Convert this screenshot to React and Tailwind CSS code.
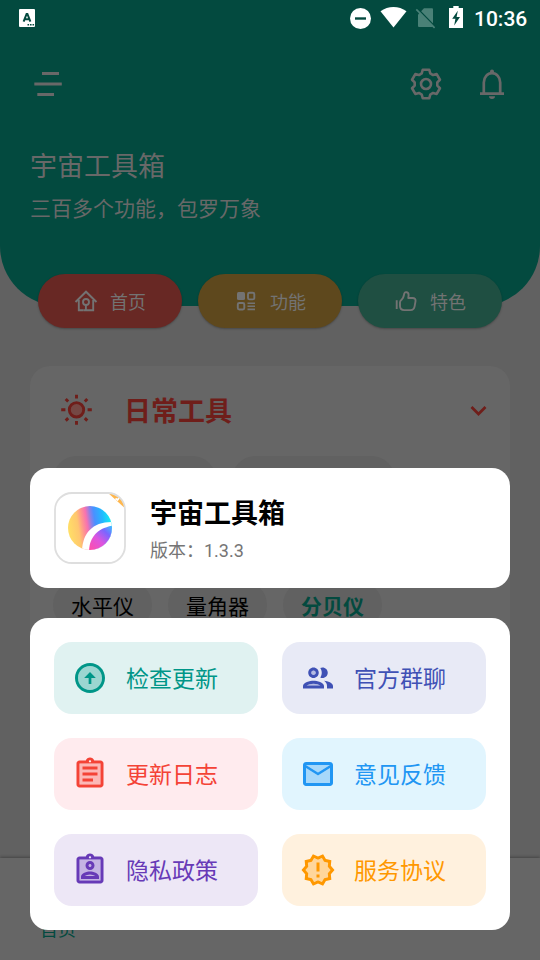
import React from 'react';

const FRAME =
  'M19 3h-4.18C14.4 1.84 13.3 1 12 1c-1.3 0-2.4.84-2.82 2H5c-1.1 0-2 .9-2 2v14c0 1.1.9 2 2 2h14c1.1 0 2-.9 2-2V5c0-1.1-.9-2-2-2zm-7-.25c.41 0 .75.34.75.75s-.34.75-.75.75-.75-.34-.75-.75.34-.75.75-.75zM19 19H5V5h14v14z';

const ACTIONS = [
  {
    label: '检查更新',
    tile: 'bg-[#e0f2f1] text-[#009688]',
    soft: 'M12 4a8 8 0 1 0 0 16 8 8 0 0 0 0-16z',
    line: 'M12 20c-4.41 0-8-3.59-8-8s3.59-8 8-8 8 3.59 8 8-3.59 8-8 8m0 2c5.52 0 10-4.48 10-10S17.52 2 12 2 2 6.48 2 12s4.48 10 10 10zM11.1 12v4h1.8v-4h3L12 8l-3.9 4h3z',
  },
  {
    label: '官方群聊',
    tile: 'bg-[#e8eaf6] text-[#3f51b5]',
    soft: 'M4.34 17h9.32c-.84-.58-2.87-1.25-4.66-1.25S5.18 16.42 4.34 17zM9 7a1.5 1.5 0 1 0 0 3 1.5 1.5 0 0 0 0-3z',
    line: 'M9 13.75c-2.34 0-7 1.17-7 3.5V19h14v-1.75c0-2.33-4.66-3.5-7-3.5zM4.34 17c.84-.58 2.87-1.25 4.66-1.25s3.82.67 4.66 1.25H4.34zM9 12c1.93 0 3.5-1.57 3.5-3.5S10.93 5 9 5 5.5 6.57 5.5 8.5 7.07 12 9 12zm0-5c.83 0 1.5.67 1.5 1.5S9.83 10 9 10s-1.5-.67-1.5-1.5S8.17 7 9 7zm7.04 6.81c1.16.84 1.96 1.96 1.96 3.44V19h4v-1.75c0-2.02-3.5-3.17-5.96-3.44zM15 12c1.93 0 3.5-1.57 3.5-3.5S16.93 5 15 5c-.54 0-1.04.13-1.5.35.63.89 1 1.98 1 3.15s-.37 2.26-1 3.15c.46.22.96.35 1.5.35z',
  },
  {
    label: '更新日志',
    tile: 'bg-[#ffebee] text-[#f44336]',
    soft: 'M5 5h14v14H5z',
    line: FRAME + 'M7 15h7v2H7zM7 11h10v2H7zM7 7h10v2H7z',
  },
  {
    label: '意见反馈',
    tile: 'bg-[#e1f5fe] text-[#2196f3]',
    soft: 'M20 8l-8 5-8-5v10h16zM20 6H4l8 4.99z',
    line: 'M22 6c0-1.1-.9-2-2-2H4c-1.1 0-2 .9-2 2v12c0 1.1.9 2 2 2h16c1.1 0 2-.9 2-2V6zm-2 0l-8 4.99L4 6h16zm0 12H4V8l8 5 8-5v10z',
  },
  {
    label: '隐私政策',
    tile: 'bg-[#ede7f6] text-[#673ab7]',
    soft: 'M5 5h14v14H5z',
    line:
      FRAME +
      'M12 12c1.65 0 3-1.35 3-3s-1.35-3-3-3-3 1.35-3 3 1.35 3 3 3zm0-4c.55 0 1 .45 1 1s-.45 1-1 1-1-.45-1-1 .45-1 1-1zm6 8.58c0-2.5-3.97-3.58-6-3.58s-6 1.08-6 3.58V18h12v-1.42zM8.48 16c.74-.51 2.23-1 3.52-1s2.78.49 3.52 1H8.48z',
  },
  {
    label: '服务协议',
    tile: 'bg-[#fff1de] text-[#ff9800]',
    soft: 'M18.49 9.89l.26-2.79-2.74-.62-1.43-2.41L12 5.18 9.42 4.07 7.99 6.49l-2.74.61.26 2.78L3.66 12l1.85 2.1-.26 2.8 2.74.62 1.43 2.41L12 18.82l2.58 1.11 1.43-2.41 2.74-.62-.26-2.79L20.34 12z',
    line: 'M23 12l-2.44-2.79.34-3.69-3.61-.82-1.89-3.2L12 2.96 8.6 1.5 6.71 4.69 3.1 5.5l.34 3.7L1 12l2.44 2.79-.34 3.7 3.61.82L8.6 22.5l3.4-1.47 3.4 1.46 1.89-3.19 3.61-.82-.34-3.69L23 12zm-4.51 2.11l.26 2.79-2.74.62-1.43 2.41L12 18.82l-2.58 1.11-1.43-2.41-2.74-.62.26-2.8L3.66 12l1.85-2.12-.26-2.78 2.74-.61 1.43-2.41L12 5.18l2.58-1.11 1.43 2.41 2.74.62-.26 2.79L20.34 12l-1.85 2.11zM11 15h2v2h-2zM11 7h2v6h-2z',
  },
];

// Six-toothed gear outline, centred on 0,0.
const GEAR = (() => {
  const pts = [];
  for (let k = 0; k < 6; k++) {
    for (const [r, a] of [[11.4, -22], [14.6, -13], [14.6, 13], [11.4, 22]]) {
      const t = ((k * 60 + a - 90) * Math.PI) / 180;
      pts.push((r * Math.cos(t)).toFixed(2) + ',' + (r * Math.sin(t)).toFixed(2));
    }
  }
  return 'M' + pts.join('L') + 'Z';
})();

function StatusBar() {
  return (
    <div className="flex h-9 items-center justify-between pl-[19px] pr-3 text-white">
      <svg width="16" height="18" viewBox="0 0 16 18">
        <rect width="16" height="18" rx="1" fill="currentColor" />
        <path d="M4.600 12.600L7.600 5h.8l3 7.600M5.800 10.200h4.400" fill="none" stroke="#034a3f" strokeWidth="2" />
        <path d="M8.500 15.800h1.600M11 15.800h1.600M13.500 15.800h1.600" stroke="#034a3f" strokeWidth="1.400" />
      </svg>
      <div className="flex items-center">
        <svg width="118" height="24" viewBox="348 6 118 24">
          <circle cx="360.500" cy="18.500" r="10.500" fill="#fff" />
          <path d="M355 18.500h11" stroke="#034a3f" strokeWidth="2.400" />
          <path d="M380.500 11.300C388 5.400 399 5.400 406.500 11.300L393.500 27.500z" fill="#fff" />
          <path d="M418 14.500L424 8.200h8a1 1 0 0 1 1 1V26a1 1 0 0 1-1 1h-13a1 1 0 0 1-1-1z" fill="#4a8177" />
          <path d="M417.200 8.300l18.500 19" stroke="#034a3f" strokeWidth="1.600" />
          <path d="M416.300 9.300l18.300 18.500" stroke="#4a8177" strokeWidth="1.700" />
          <path d="M449 8h4.300V6h5.400v2h4.300v20h-14z" fill="#fff" />
          <path d="M457.800 10.800l-5.600 8h3.200l-1.200 6.600 5.800-8.400h-3.400z" fill="#034a3f" />
        </svg>
        <span className="ml-2 w-[54px] whitespace-nowrap pt-px text-[21px] font-medium leading-9 font-[Roboto,sans-serif]">10:36</span>
      </div>
    </div>
  );
}

function Header() {
  return (
    <header className="h-[306px] rounded-b-[60px] bg-[#034a3f] text-[#686868]">
      <StatusBar />
      <div className="flex h-24 items-center justify-between pl-8 pr-[30px]">
        <svg width="32" height="32" viewBox="32 68 32 32" stroke="currentColor" strokeWidth="2.800">
          <path d="M42 73.500h17M34.300 84h27.500M37.300 94.500H54" />
        </svg>
        <div className="flex gap-[30px]">
          <svg width="36" height="36" viewBox="-18 -18 36 36" fill="none" stroke="currentColor" strokeWidth="2.600" strokeLinejoin="round">
            <path d={GEAR} />
            <circle r="5" />
          </svg>
          <svg width="36" height="36" viewBox="474 66 36 36" fill="none" stroke="currentColor" strokeWidth="2.700">
            <path d="M483.800 93.500V82.500a8.200 9.300 0 0 1 16.400 0v11M480 93.700h24" />
            <path d="M490 73v-1.500a2 2 0 0 1 4 0V73zM489 96.300h6a3 2.700 0 0 1-6 0z" fill="currentColor" stroke="none" />
          </svg>
        </div>
      </div>
      <h1 className="mt-[15px] pl-[30px] text-[27px] leading-10">宇宙工具箱</h1>
      <p className="mt-[7px] pl-[30px] text-[21px] leading-[30px]">三百多个功能，包罗万象</p>
    </header>
  );
}

function NavPills() {
  const pill = 'flex h-[54px] flex-1 items-center justify-center gap-3 rounded-full text-[18px] text-[#737373] shadow-[0_1px_2px_rgba(0,0,0,0.25)] ';
  return (
    <nav className="relative -mt-8 flex gap-4 px-[38px]">
      <div className={pill + 'bg-[#682824]'}>
        <svg width="24" height="24" viewBox="0 0 24 24" fill="none" stroke="currentColor" strokeWidth="1.900">
          <path d="M1.500 13L12 2.700 22.500 13M4.800 11v10.200h5M19.200 11v10.200h-5M10 21.200h1.900v-5.500M14.900 21.200H12" />
          <circle cx="12" cy="13" r="3" />
        </svg>
        <span className="pt-0.5">首页</span>
      </div>
      <div className={pill + 'bg-[#5e481d]'}>
        <svg width="24" height="24" viewBox="0 0 24 24" fill="none" stroke="currentColor" strokeWidth="1.900">
          <rect x="3" y="3" width="8" height="8" rx="1.500" fill="currentColor" stroke="none" />
          <rect x="14" y="3.800" width="6.300" height="6.600" rx="1.500" />
          <rect x="3.800" y="14" width="6.500" height="6.500" rx="1.500" />
          <path d="M13.500 14.200H21M13.500 17.300H21M13.500 20.400H21" strokeWidth="1.600" />
        </svg>
        <span className="pt-0.5">功能</span>
      </div>
      <div className={pill + 'bg-[#1f4f42]'}>
        <svg width="24" height="24" viewBox="0 0 24 24" fill="none" stroke="currentColor" strokeWidth="1.900" strokeLinejoin="round">
          <path d="M2.700 11.200V20" />
          <path d="M6 13.200C6 12 6.800 11.200 7.800 10.400 9 9.400 9.500 8.200 9.800 6.500L10.300 4.400C10.900 2.400 14.700 2.800 14.600 6L14.300 9h4.200c2.300 0 3.400 1.300 3 3.400l-.9 5c-.4 2.400-1.900 3.700-4.100 3.700H10c-2.600 0-4-1.500-4-4z" />
        </svg>
        <span className="pt-0.5">特色</span>
      </div>
    </nav>
  );
}

function ToolsCard() {
  return (
    <section className="mx-[30px] mt-[38px] h-[492px] rounded-t-[20px] bg-[#666]">
      <div className="flex h-[90px] items-center pl-7 pr-[19px] text-[#6f1e1a]">
        <svg width="36" height="36" viewBox="-18.500 -16.800 36 36" fill="none" stroke="currentColor" strokeWidth="2.900">
          <circle r="7.200" fill="#754844" />
          <path d="M0-15v3.800M0 11.200v3.800M-15.300 0h4.200M11.100 0h4.200M-10.800-10.800l2.500 2.500M8.300 8.300l2.500 2.500M-10.800 10.800l2.500-2.500M8.300-8.300l2.500-2.500" />
        </svg>
        <h2 className="ml-[30px] flex-1 pt-px text-[27px] font-bold leading-10">日常工具</h2>
        <svg width="24" height="24" viewBox="0.500 1 24 24" fill="none" stroke="currentColor" strokeWidth="2.700">
          <path d="M5 9l7 7 7-7" />
        </svg>
      </div>
      <div className="flex gap-4 pl-[23px]">
        <div className="h-[47px] w-[163px] rounded-full bg-[#616161]" />
        <div className="h-[47px] w-[163px] rounded-full bg-[#616161]" />
      </div>
      <div className="mt-[78px] flex gap-4 pl-[23px] text-[21px] leading-[52px] text-black">
        <div className="h-12 w-[99px] rounded-full bg-[#616161] text-center">水平仪</div>
        <div className="h-12 w-[99px] rounded-full bg-[#616161] text-center">量角器</div>
        <div className="h-12 w-[99px] rounded-full bg-[#616161] text-center font-bold text-[#034a3f]">分贝仪</div>
      </div>
    </section>
  );
}

function AppLogo() {
  return (
    <svg width="72" height="72" viewBox="0 0 72 72">
      <defs>
        <linearGradient id="sweep" x1="0" y1="0.500" x2="1" y2="0.350">
          <stop offset="0" stopColor="#ffdf66" />
          <stop offset="0.230" stopColor="#ffc76f" />
          <stop offset="0.340" stopColor="#ff9590" />
          <stop offset="0.440" stopColor="#f772b0" />
          <stop offset="0.540" stopColor="#8d80e8" />
          <stop offset="0.620" stopColor="#4a90ff" />
          <stop offset="0.800" stopColor="#22b8ff" />
          <stop offset="1" stopColor="#12f3ee" />
        </linearGradient>
        <linearGradient id="lower" x1="0.100" y1="1" x2="1" y2="0">
          <stop offset="0" stopColor="#ff4fa8" />
          <stop offset="0.400" stopColor="#dc55df" />
          <stop offset="0.700" stopColor="#7a66ff" />
          <stop offset="1" stopColor="#2bd5ff" />
        </linearGradient>
        <clipPath id="ball"><circle cx="36" cy="36" r="22" /></clipPath>
        <clipPath id="frame"><rect x="1" y="1" width="70" height="70" rx="17" /></clipPath>
      </defs>
      <rect x="1" y="1" width="70" height="70" rx="17" fill="#fff" />
      <g clipPath="url(#frame)">
        <path d="M53 0h10l12 14v6z" fill="#ffb74d" />
        <path d="M61.500 6.500l2 1.500 1.500-2" fill="none" stroke="#fff" strokeWidth="1.800" />
      </g>
      <rect x="1" y="1" width="70" height="70" rx="17" fill="none" stroke="#dedede" strokeWidth="1.800" />
      <g clipPath="url(#ball)">
        <rect x="14" y="14" width="44" height="44" fill="url(#sweep)" />
        <path d="M28 60C28 42 38 29 60 30V60z" fill="#fff" />
        <path d="M35 60C35 47 42 36 60 33.500V60z" fill="url(#lower)" />
      </g>
    </svg>
  );
}

function InfoSheet() {
  return (
    <div className="absolute inset-x-0 bottom-0 flex flex-col gap-[30px] p-[30px]">
      <section className="flex h-[120px] items-center gap-6 rounded-[18px] bg-white px-6">
        <AppLogo />
        <div className="pt-[3px]">
          <h2 className="text-[27px] font-bold leading-10 text-black">宇宙工具箱</h2>
          <p className="mt-[3px] text-[18px] leading-7 text-[#757575]">版本：1.3.3</p>
        </div>
      </section>
      <section className="grid grid-cols-2 gap-6 rounded-[18px] bg-white p-6">
        {ACTIONS.map((a) => (
          <button key={a.label} className={'flex h-[72px] items-center gap-[18px] rounded-[18px] pl-[18px] text-[23px] ' + a.tile}>
            <svg width="36" height="36" viewBox="0 0 24 24" fill="currentColor">
              <path d={a.soft} opacity="0.300" />
              <path d={a.line} fillRule="evenodd" />
            </svg>
            <span className="pt-[5px]">{a.label}</span>
          </button>
        ))}
      </section>
    </div>
  );
}

export default function App() {
  return (
    <div className="relative h-[960px] w-[540px] overflow-hidden bg-[#616161] font-[Roboto,'Noto_Sans_CJK_SC',sans-serif]">
      <Header />
      <NavPills />
      <ToolsCard />
      <footer className="relative h-[102px] bg-[#666] pl-10 pt-[58px] text-[18px] leading-7 text-[#034a3f] shadow-[0_-1px_3px_rgba(0,0,0,0.3)]">首页</footer>
      <InfoSheet />
    </div>
  );
}
